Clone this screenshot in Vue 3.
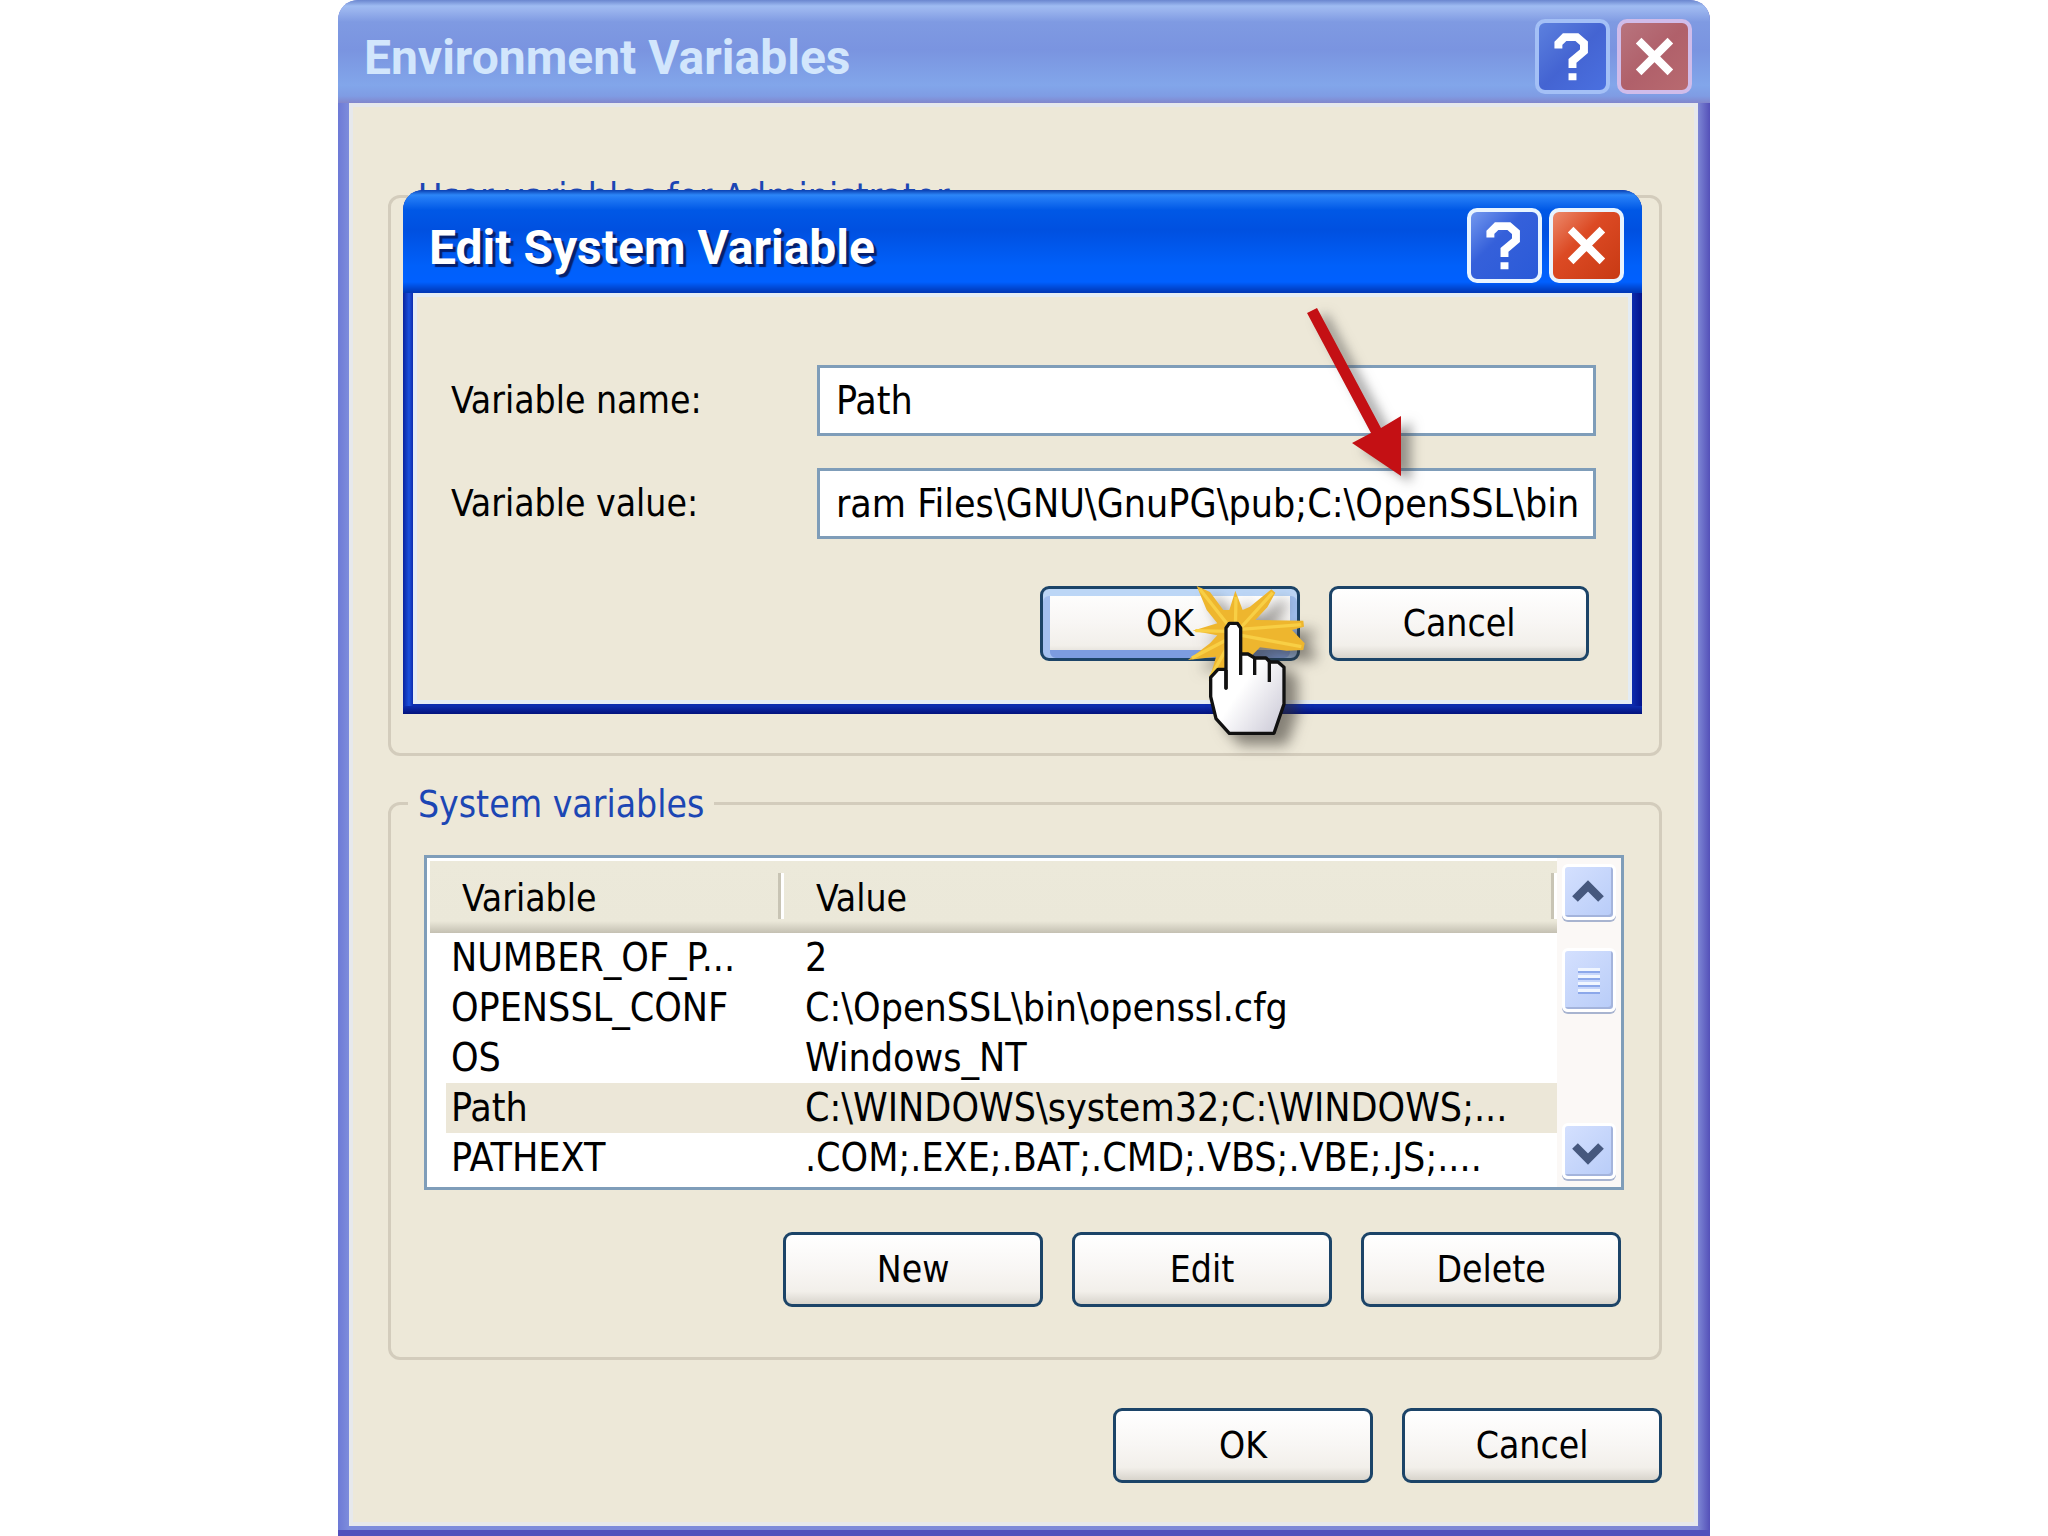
<template>
  <div class="desktop">
    <section class="window" aria-labelledby="env-title">
      <header class="titlebar titlebar-inactive">
        <h1 id="env-title" class="title">Environment Variables</h1>
        <div class="caption-buttons">
          <button type="button" class="caption help" aria-label="Help">
            <svg viewBox="0 0 76 76"><path d="M22 29 V23 L29 16 H43 L51 23 V32 L38 43 V51 M38 57 V65" /></svg>
          </button>
          <button type="button" class="caption close" aria-label="Close">
            <svg viewBox="0 0 76 76"><path d="M20 20 L56 56 M56 20 L20 56" /></svg>
          </button>
        </div>
      </header>

      <div class="window-body">
        <fieldset class="group user-group">
          <legend>User variables for Administrator</legend>
        </fieldset>

        <fieldset class="group">
          <legend>System variables</legend>

          <div class="list">
            <table class="vars">
              <thead>
                <tr>
                  <th scope="col" class="col-name">Variable</th>
                  <th scope="col">Value</th>
                </tr>
              </thead>
              <tbody>
                <tr
                  v-for="row in rows"
                  :key="row.name"
                  :class="{ selected: row.name === selected }"
                  @click="selected = row.name"
                >
                  <td>{{ row.name }}</td>
                  <td>{{ row.value }}</td>
                </tr>
              </tbody>
            </table>

            <div class="scrollbar">
              <button type="button" class="scroll-btn" aria-label="Scroll up">
                <svg viewBox="0 0 46 50"><path d="M10 32 L23 19 L36 32" /></svg>
              </button>
              <div class="thumb"><i></i><i></i><i></i><i></i></div>
              <button type="button" class="scroll-btn scroll-down" aria-label="Scroll down">
                <svg viewBox="0 0 46 50"><path d="M10 20 L23 33 L36 20" /></svg>
              </button>
            </div>
          </div>

          <div class="actions group-actions">
            <button type="button" class="btn">New</button>
            <button type="button" class="btn">Edit</button>
            <button type="button" class="btn">Delete</button>
          </div>
        </fieldset>

        <div class="actions window-actions">
          <button type="button" class="btn">OK</button>
          <button type="button" class="btn">Cancel</button>
        </div>
      </div>

      <!-- Modal dialog over the first group -->
      <div class="dialog" role="dialog" aria-labelledby="edit-title">
        <header class="titlebar titlebar-active">
          <h2 id="edit-title" class="title">Edit System Variable</h2>
          <div class="caption-buttons">
            <button type="button" class="caption help" aria-label="Help">
              <svg viewBox="0 0 76 76"><path d="M22 29 V23 L29 16 H43 L51 23 V32 L38 43 V51 M38 57 V65" /></svg>
            </button>
            <button type="button" class="caption close" aria-label="Close">
              <svg viewBox="0 0 76 76"><path d="M20 20 L56 56 M56 20 L20 56" /></svg>
            </button>
          </div>
        </header>

        <form class="dialog-body" @submit.prevent>
          <div class="field">
            <label for="var-name">Variable name:</label>
            <input id="var-name" v-model="name" type="text" />
          </div>
          <div class="field">
            <label for="var-value">Variable value:</label>
            <input id="var-value" v-model="value" type="text" />
          </div>
          <div class="actions dialog-actions">
            <button type="submit" class="btn btn-default">OK</button>
            <button type="button" class="btn">Cancel</button>
          </div>
        </form>

        <svg class="arrow" viewBox="0 0 120 190" aria-hidden="true">
          <path d="M9 9 L19 4 L83 124 L103 112 L103 172 L54 139 L73 129 Z" />
        </svg>

        <svg class="pointer" viewBox="0 0 540 600" aria-hidden="true">
          <defs>
            <linearGradient id="palm" x1="0" y1="0" x2="1" y2="1">
              <stop offset="0.5" stop-color="#ffffff" />
              <stop offset="1" stop-color="#c8c6d4" />
            </linearGradient>
          </defs>
          <path
            class="burst"
            d="M110 78 L150 96 L190 150 L208 150 L226 92 L248 150 L270 140 L334 88 L346 98 L322 142 L286 180 L430 182 L432 200 L396 210 L434 250 L430 270 L380 272 L300 262 L262 300 L208 310 L146 362 L160 318 L168 290 L84 300 L150 250 L172 226 L98 212 L172 190 L140 150 Z"
          />
          <path
            class="rays"
            d="M120 88 L216 210 M228 110 L226 210 M338 98 L236 210 M424 194 L240 208 M424 260 L244 226 M106 212 L206 214 M96 294 L206 236 M152 350 L208 250"
          />
          <path
            class="hand"
            d="M198 385 V204 L208 190 H232 L242 204 V282 H264 L284 294 L318 294 L330 306 H354 L372 322 V432 L342 520 H208 L168 476 L152 410 V352 L174 328 H198 Z"
          />
          <path class="knuckles" d="M242 280 V345 M284 292 V345 M328 302 V366 M198 330 V386" />
        </svg>
      </div>
    </section>
  </div>
</template>

<script setup>
import { ref } from 'vue';

const rows = [
  { name: 'NUMBER_OF_P...', value: '2' },
  { name: 'OPENSSL_CONF', value: 'C:\\OpenSSL\\bin\\openssl.cfg' },
  { name: 'OS', value: 'Windows_NT' },
  { name: 'Path', value: 'C:\\WINDOWS\\system32;C:\\WINDOWS;...' },
  { name: 'PATHEXT', value: '.COM;.EXE;.BAT;.CMD;.VBS;.VBE;.JS;....' },
];

const selected = ref('Path');
const name = ref('Path');
const value = ref('ram Files\\GNU\\GnuPG\\pub;C:\\OpenSSL\\bin');
</script>

<style>
body {
  margin: 0;
  background: #fff;
}
</style>

<style scoped>
.desktop {
  display: flex;
  justify-content: center;
  min-height: 100vh;
  font-family: 'DejaVu Sans Condensed', 'Noto Sans', sans-serif;
  font-size: 37px;
  line-height: 50px;
  color: #000;
}

button,
input {
  font: inherit;
  color: inherit;
}

.window {
  position: relative;
  box-sizing: border-box;
  width: 67%;
  display: flex;
  flex-direction: column;
  border-radius: 20px 20px 0 0;
  background: linear-gradient(90deg, #6d7ad6, #7d8cdc 11px, #7d86d4 calc(100% - 12px), #5450b8);
}

/* Title bars */
.titlebar {
  display: flex;
  align-items: center;
  justify-content: space-between;
  box-sizing: border-box;
  height: 103px;
  padding: 9px 18px 0 26px;
  border-radius: 20px 20px 0 0;
}

.titlebar-inactive {
  background: linear-gradient(#6a86cf 0, #9fbcf2 6px, #9ab4ee 10px, #7f9ae2 22px, #7a94e0 50px, #82a6ea 85px, #7f9ce4 96px, #8286cc 103px);
}

.titlebar-active {
  background: linear-gradient(#0a3fb0 0, #2c86f8 5px, #1f78f4 9px, #0058e6 20px, #0050e0 40px, #0060fa 76px, #0060ff 92px, #0038b8 102px);
}

.title {
  margin: 0;
  padding-top: 4px;
  font-family: Roboto, sans-serif;
  font-size: 48px;
  font-weight: 700;
  line-height: 56px;
}

.titlebar-inactive .title {
  color: #d2e6fc;
}

.titlebar-active .title {
  color: #fff;
  text-shadow: 3px 3px 1px #06206c;
}

.caption-buttons {
  display: flex;
  gap: 7px;
}

.caption {
  box-sizing: border-box;
  width: 75px;
  height: 75px;
  padding: 0;
  border: 4px solid #e8f4ff;
  border-radius: 10px;
}

.caption svg {
  display: block;
  width: 67px;
  height: 67px;
  fill: none;
  stroke: #fff;
  stroke-width: 9;
}

.help {
  background: linear-gradient(135deg, #7398ee, #3560da 40%, #2a5ad8);
}

.close {
  background: linear-gradient(135deg, #ec8a6c, #dc4a24 40%, #c83a14);
}

.titlebar-inactive .caption {
  border-color: #a4c0f6;
}

.titlebar-inactive .help {
  background: linear-gradient(135deg, #5c80de, #4464d2 50%, #4a70e0);
}

.titlebar-inactive .close {
  border-color: #d0bcea;
  background: linear-gradient(135deg, #b8747e, #b0606a 50%, #b86a70);
}

/* Window contents */
.window-body {
  flex: 1;
  margin: 0 12px 10px 11px;
  padding: 70px 36px 42px 39px;
  background: #ede8d8;
  box-shadow: inset 0 0 0 4px #e6e8ec;
}

.window::after {
  content: '';
  position: absolute;
  left: 0;
  right: 0;
  bottom: 0;
  height: 6px;
  background: #524fbc;
}

.group {
  min-width: 0;
  margin: 0 0 24px;
  padding: 28px 35px 50px 33px;
  border: 3px solid #d3ccbc;
  border-radius: 12px;
}

.group legend {
  margin-left: -16px;
  padding: 3px 10px 0;
  line-height: 44px;
  color: #1c46b4;
}

.user-group {
  box-sizing: border-box;
  height: 583px;
}

.list {
  display: flex;
  border: 3px solid #7f9db9;
  background: #fff;
}

.vars {
  flex: 1;
  table-layout: fixed;
  width: 100%;
  border-collapse: collapse;
  margin: 3px 0 4px 3px;
}

.vars th {
  position: relative;
  height: 72px;
  padding: 4px 0 0 32px;
  box-sizing: border-box;
  font-weight: 400;
  text-align: left;
  background: linear-gradient(#ece9da 0, #ebe8d9 60px, #c4c0b2 72px);
}

.vars th::after {
  content: '';
  position: absolute;
  top: 12px;
  right: 0;
  width: 3px;
  height: 46px;
  border-right: 3px solid #fff;
  background: #c8c4b4;
}

.col-name {
  width: 354px;
}

.vars td {
  height: 50px;
  padding: 0 0 0 21px;
  font-size: 39px;
  white-space: nowrap;
}

.selected td {
  background: #ece7d8;
}

.selected td:first-child {
  background: linear-gradient(90deg, #fff 16px, #ece7d8 16px);
}

/* Scrollbar */
.scrollbar {
  display: flex;
  flex-direction: column;
  align-items: center;
  width: 64px;
  padding: 6px 0 8px;
  background: #fbf8f6;
}

.scroll-btn,
.thumb {
  box-sizing: border-box;
  width: 54px;
  border: 3px solid #fff;
  border-radius: 6px;
  background: linear-gradient(135deg, #d4e0fe, #b8ccf8);
  box-shadow: inset -2px -2px 0 #a4b4dc, 0 2px 0 #a8b4d0;
}

.scroll-btn {
  height: 56px;
  padding: 0;
}

.scroll-btn svg {
  display: block;
  width: 46px;
  height: 50px;
  fill: none;
  stroke: #46587e;
  stroke-width: 8;
}

.thumb {
  display: flex;
  flex-direction: column;
  align-items: center;
  justify-content: center;
  gap: 4px;
  height: 64px;
  margin-top: 28px;
}

.thumb i {
  width: 22px;
  height: 3px;
  background: #f0f6ff;
  box-shadow: 0 2px 0 #8ca8ea;
}

.scroll-down {
  margin-top: auto;
}

/* Push buttons */
.actions {
  display: flex;
  justify-content: flex-end;
  gap: 29px;
}

.group-actions {
  margin: 42px 3px 0 0;
}

.window-actions {
  margin-top: 48px;
}

.btn {
  box-sizing: border-box;
  width: 260px;
  height: 75px;
  padding: 0;
  border: 3px solid #1c4468;
  border-radius: 9px;
  background: linear-gradient(#fff, #f8f6f4 50%, #f2efea 82%, #d8d4cc);
}

.btn-default {
  box-shadow: inset 0 7px 0 #bcd6f6, inset 7px 0 0 #a4c0f0, inset -7px 0 0 #9cbcec, inset 0 -8px 0 #7c9ce0;
}

/* Edit dialog */
.dialog {
  position: absolute;
  top: 190px;
  left: 65px;
  right: 68px;
  padding-bottom: 10px;
  border-radius: 20px 20px 0 0;
  background: linear-gradient(90deg, #0a24a0, #1c50dc 6px, #0c2cae 10px, #0c2cae calc(100% - 10px), #04148c);
}

.dialog::after {
  content: '';
  position: absolute;
  left: 0;
  right: 0;
  bottom: 0;
  height: 8px;
  background: linear-gradient(#0c2cae, #02127c);
}

.titlebar-active {
  padding-top: 8px;
}

.dialog-body {
  margin: 0 10px;
  padding: 72px 36px 43px 38px;
  background: #ede8d8;
  box-shadow: inset 0 0 0 4px #e4ecf4;
}

.field {
  display: flex;
  align-items: center;
  margin-bottom: 32px;
}

.field label {
  flex: 0 0 366px;
}

.field input {
  flex: 1;
  min-width: 0;
  box-sizing: border-box;
  height: 71px;
  padding: 0 16px;
  border: 3px solid #7f9db9;
  border-radius: 0;
  background: #fff;
  font-size: 39px;
  outline: none;
}

.dialog-actions {
  margin: 47px 7px 0 0;
}

.arrow {
  position: absolute;
  top: 114px;
  left: 895px;
  width: 120px;
  height: 190px;
  overflow: visible;
  fill: #c41014;
  filter: drop-shadow(10px 6px 6px rgba(60, 60, 60, 0.5));
}

.pointer {
  position: absolute;
  z-index: 1;
  top: 370px;
  left: 757px;
  width: 180px;
  height: 200px;
  overflow: visible;
  filter: drop-shadow(12px 10px 7px rgba(50, 45, 40, 0.55));
}

.burst {
  fill: #eeb62e;
}

.rays {
  fill: none;
  stroke: #f8cf45;
  stroke-width: 10;
}

.hand {
  fill: url(#palm);
  stroke: #111;
  stroke-width: 10;
  stroke-linejoin: round;
}

.knuckles {
  fill: none;
  stroke: #111;
  stroke-width: 10;
}
</style>
